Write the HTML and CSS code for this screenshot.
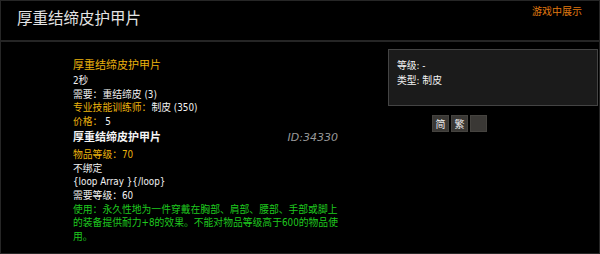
FILE: index.html
```html
<!DOCTYPE html>
<html lang="zh-CN">
<head>
<meta charset="utf-8">
<link rel="stylesheet" href="styles.css">
</head>
<body>
<div class="page">
  <div class="header">
    <div class="title">厚重结缔皮护甲片</div>
    <div class="ingame">游戏中展示</div>
  </div>
  <div class="main">
    <div class="tooltip">
      <div class="line gold name">厚重结缔皮护甲片</div>
      <div class="line">2秒</div>
      <div class="line">需要：重结缔皮 (3)</div>
      <div class="line"><span class="gold">专业技能训练师：</span>制皮 (350)</div>
      <div class="line"><span class="gold">价格：</span> 5</div>
      <div class="item-head">
        <span class="item-name">厚重结缔皮护甲片</span>
        <span class="item-id">ID:34330</span>
      </div>
      <div class="line gold">物品等级：70</div>
      <div class="line">不绑定</div>
      <div class="line">{loop Array }{/loop}</div>
      <div class="line">需要等级：60</div>
      <div class="line green">使用：永久性地为一件穿戴在胸部、肩部、腰部、手部或脚上的装备提供耐力+8的效果。不能对物品等级高于600的物品使用。</div>
    </div>
    <div class="side">
      <div class="info">
        <div class="info-line">等级: -</div>
        <div class="info-line">类型: 制皮</div>
      </div>
      <div class="buttons">
        <span class="btn">简</span>
        <span class="btn">繁</span>
        <span class="btn"></span>
      </div>
    </div>
  </div>
</div>
</body>
</html>
```

FILE: styles.css
```css
html, body {
  margin: 0;
  padding: 0;
  background: #000;
}
body {
  font-family: "DejaVu Sans Condensed", "Noto Sans CJK SC", sans-serif;
  color: #f2f2f2;
}
.page {
  width: 598px;
  height: 252px;
  border: 1px solid #262626;
  overflow: hidden;
}
.header {
  height: 39px;
  border-bottom: 2px solid #252525;
  display: flex;
  justify-content: space-between;
  padding: 0 17px 0 16px;
}
.title {
  font-family: "Noto Sans CJK SC", sans-serif;
  font-size: 15.5px;
  line-height: 20px;
  padding-top: 6px;
  color: #e4e4e4;
}
.ingame {
  font-family: "Noto Sans CJK SC", sans-serif;
  font-size: 10px;
  line-height: 14px;
  padding-top: 3px;
  color: #e07a10;
}
.main {
  display: flex;
  justify-content: space-between;
}
.tooltip {
  width: 265px;
  margin-left: 72px;
  padding-top: 17px;
  font-size: 9.8px;
  line-height: 13.7px;
}
.line {
  min-height: 13.7px;
}
.name {
  font-size: 11px;
  line-height: 16px;
  margin-top: -1px;
}
.gold {
  color: #ebb20e;
}
.green {
  color: #1fc81f;
}
.item-head {
  display: flex;
  justify-content: space-between;
  align-items: baseline;
  margin: 2px 0 3px;
  line-height: 14px;
}
.item-name {
  font-weight: bold;
  font-size: 11px;
  color: #f4f4f4;
}
.item-id {
  font-family: "DejaVu Sans", sans-serif;
  font-style: italic;
  font-size: 11px;
  color: #9a9a9a;
}
.side {
  width: 210px;
  margin-top: 7px;
  margin-right: 1px;
}
.info {
  border: 1px solid #444;
  background: #1b1b1b;
  padding: 8px 0 0 8px;
  box-sizing: border-box;
  height: 57px;
  font-size: 9.8px;
  line-height: 15px;
}
.buttons {
  display: flex;
  gap: 2px;
  margin: 9px 0 0 44px;
}
.btn {
  width: 17px;
  height: 17px;
  box-sizing: border-box;
  background: #3a3835;
  border: 1px solid #45433f;
  font-family: "Noto Sans CJK SC", sans-serif;
  font-size: 10px;
  line-height: 15px;
  text-align: center;
  color: #eee;
}
```
